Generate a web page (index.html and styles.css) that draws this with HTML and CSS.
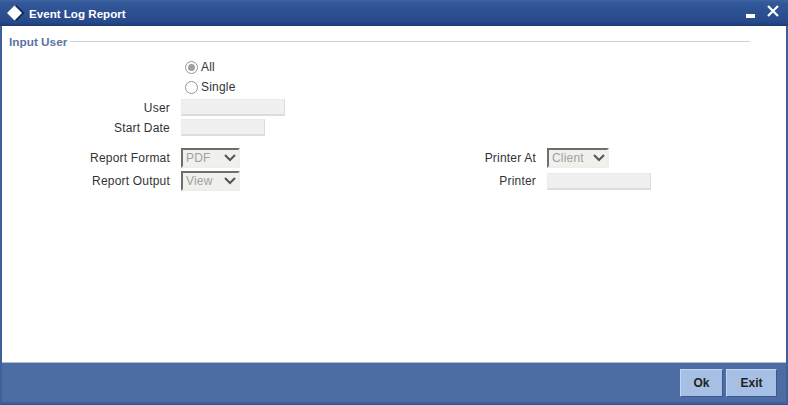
FILE: index.html
```html
<!DOCTYPE html>
<html lang="en">
<head>
<meta charset="utf-8">
<title>Event Log Report</title>
<link rel="stylesheet" href="styles.css">
</head>
<body>
<div class="window">
  <header class="titlebar">
    <svg class="logo" width="18" height="18" viewBox="0 0 18 18"><path d="M9.5 1l8 8-8 8-8-8z" fill="#10294f"/><path d="M7.5 1.5l7.5 7.5-7.5 7.5L0 9z" fill="#fff"/></svg>
    <span class="title">Event Log Report</span>
    <span class="spacer"></span>
    <svg class="minimize" width="9" height="4" viewBox="0 0 9 4"><rect width="9" height="4" fill="#fff"/></svg>
    <svg class="close" width="12" height="12" viewBox="0 0 12 12"><path d="M1 1l10 10M11 1L1 11" stroke="#fff" stroke-width="2.2" fill="none"/></svg>
  </header>
  <main class="content">
    <div class="legend"><span class="legend-text">Input User</span><span class="legend-line"></span></div>
    <div class="radios">
      <div class="radio-row"><span class="radio checked"></span><span>All</span></div>
      <div class="radio-row"><span class="radio"></span><span>Single</span></div>
    </div>
    <div class="row input-row"><label class="label">User</label><span class="input w104"></span></div>
    <div class="row input-row"><label class="label">Start Date</label><span class="input w84"></span></div>
    <div class="columns">
      <div class="col left-col">
        <div class="row"><label class="label">Report Format</label><span class="select w59"><span class="value">PDF</span><svg class="chev" width="12" height="8" viewBox="0 0 12 8"><path d="M1 1l5 5 5-5" stroke="#555" stroke-width="2" fill="none"/></svg></span></div>
        <div class="row second"><label class="label">Report Output</label><span class="select w59"><span class="value">View</span><svg class="chev" width="12" height="8" viewBox="0 0 12 8"><path d="M1 1l5 5 5-5" stroke="#555" stroke-width="2" fill="none"/></svg></span></div>
      </div>
      <div class="col right-col">
        <div class="row"><label class="label">Printer At</label><span class="select w62"><span class="value">Client</span><svg class="chev" width="12" height="8" viewBox="0 0 12 8"><path d="M1 1l5 5 5-5" stroke="#555" stroke-width="2" fill="none"/></svg></span></div>
        <div class="row second"><label class="label">Printer</label><span class="input w104"></span></div>
      </div>
    </div>
  </main>
  <footer class="footer">
    <button class="btn" type="button">Ok</button>
    <button class="btn" type="button">Exit</button>
  </footer>
</div>
</body>
</html>
```
FILE: styles.css
```css
* { box-sizing: border-box; }
html, body { margin: 0; padding: 0; }
body { width: 788px; height: 405px; overflow: hidden; font-family: "Liberation Sans", Arial, sans-serif; font-size: 12px; letter-spacing: 0.2px; color: #333; background: #fff; }
.window { width: 788px; height: 405px; display: flex; flex-direction: column; background: #3e5f9a; padding: 0 2px 2px; border-bottom: 1px solid #355489; }
.titlebar { height: 26px; margin: 0 -2px; padding: 0 9px 0 7px; display: flex; align-items: center; color: #fff; background: linear-gradient(#3f639f 0, #31589a 3px, #27498a 22px, #1b3a75 26px); }
.logo { flex: none; margin-right: 4px; }
.title { font-weight: bold; font-size: 11.6px; letter-spacing: 0; }
.spacer { flex: 1; }
.minimize { margin: 6px 12px 0 0; }
.close { margin-top: -5px; }
.content { flex: 1; background: #fff; padding-top: 8px; display: flex; flex-direction: column; }
.legend { display: flex; align-items: center; height: 15px; padding-right: 36px; }
.legend-text { margin-left: 7px; padding-right: 2px; font-weight: bold; font-size: 11.8px; letter-spacing: 0; color: #5a75a3; }
.legend-line { flex: 1; height: 1px; background: #c8d4dc; margin-left: 1px; }
.radios { margin: 8px 0 0 183px; }
.radio-row { height: 20px; display: flex; align-items: center; gap: 3px; }
.radio { width: 13px; height: 13px; border-radius: 50%; border: 1px solid #969696; background: #fff; display: flex; align-items: center; justify-content: center; }
.radio.checked::after { content: ""; width: 7px; height: 7px; border-radius: 50%; background: #a0a0a0; }
.row { display: flex; align-items: center; height: 20px; }
.label { width: 168px; text-align: right; margin-right: 11px; }
.input-row .label { margin-top: 2px; }
.input { display: block; height: 17px; margin-top: 1px; background: #f0f0f0; border: 1px solid #ebebeb; border-bottom: 2px solid #dcdcdc; border-right: 1px solid #dcdcdc; }
.w104 { width: 104px; }
.w84 { width: 84px; }
.columns { display: flex; margin-top: 11px; }
.left-col { width: 366px; }
.right-col { width: 300px; }
.col .second { margin-top: 3px; }
.select { height: 20px; display: flex; align-items: center; justify-content: space-between; padding: 0 2px 0 3px; background: #f0f0ec; color: #a0a0a0; border: 2px solid; border-color: #6e6e6e #eeeeea #eeeeea #6e6e6e; }
.w59 { width: 59px; }
.w62 { width: 62px; }
.footer { height: 40px; display: flex; justify-content: flex-end; align-items: flex-start; gap: 3px; padding: 6px 9px 0 0; background: #4c6ca3; border-top: 1px solid #aebfdb; flex: none; }
.btn { height: 28px; padding: 0; width: 43px; font: bold 12px "Liberation Sans", Arial, sans-serif; color: #222; background: #a5c0e4; border: 1px solid; border-color: #c5d6ee #3c5890 #3c5890 #c5d6ee; }
.btn:last-child { width: 51px; }
```
